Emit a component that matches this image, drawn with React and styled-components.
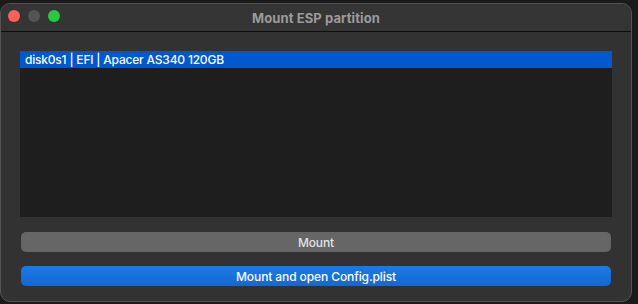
import React from "react";
import styled, { createGlobalStyle } from "styled-components";

const Global = createGlobalStyle`
  html, body { margin: 0; padding: 0; background: #1b1b1b; }
  body { font-family: Inter, "Noto Sans", sans-serif; -webkit-font-smoothing: antialiased; }
`;

const Screen = styled.div`
  width: 638px;
  height: 304px;
  padding-top: 3px;
  box-sizing: border-box;
  overflow: hidden;
`;

const Window = styled.div`
  width: 632px;
  height: 299px;
  box-sizing: border-box;
  background: #323232;
  border: 1px solid #545454;
  border-radius: 10px;
  display: flex;
  flex-direction: column;
  overflow: hidden;
`;

const TitleBar = styled.div`
  height: 27px;
  flex: none;
  position: relative;
  display: flex;
  align-items: center;
  justify-content: center;
  background: #353535;
  border-bottom: 1px solid #0e0e0e;
`;

const Lights = styled.div`
  position: absolute;
  left: 7px;
  top: 6px;
  display: flex;
  gap: 8px;
`;

const Light = styled.span`
  width: 12px;
  height: 12px;
  border-radius: 50%;
  background: ${(p) => p.$c};
`;

const Title = styled.div`
  font-size: 13px;
  font-weight: 700;
  color: #9b9b9b;
  letter-spacing: 0.1px;
`;

const Content = styled.div`
  flex: 1;
  padding: 19px 19px 0 19px;
  display: flex;
  flex-direction: column;
`;

const List = styled.div`
  height: 166px;
  background: #1e1e1e;
  display: flex;
  flex-direction: column;
`;

const Row = styled.div`
  height: 17px;
  display: flex;
  align-items: center;
  padding-left: 5px;
  font-size: 12px;
  font-weight: 500;
  letter-spacing: -0.2px;
  color: ${(p) => (p.$selected ? "#ffffff" : "#dddddd")};
  background: ${(p) => (p.$selected ? "#0058d0" : "transparent")};
`;

const Button = styled.button`
  margin: 0 1px;
  height: 20px;
  border: none;
  border-radius: 5px;
  font-family: inherit;
  font-size: 12px;
  font-weight: 500;
  letter-spacing: -0.1px;
  padding: 0;
  color: ${(p) => (p.$primary ? "#ffffff" : "#e2e2e2")};
  background: ${(p) =>
    p.$primary ? "linear-gradient(#1a7be6, #1668d0)" : "#666666"};
`;

const Gap = styled.div`
  height: ${(p) => p.$h}px;
  flex: none;
`;

export default function App() {
  return (
    <Screen>
      <Global />
      <Window>
        <TitleBar>
          <Lights>
            <Light $c="#fe5f57" />
            <Light $c="#545454" />
            <Light $c="#28c840" />
          </Lights>
          <Title>Mount ESP partition</Title>
        </TitleBar>
        <Content>
          <List>
            <Row $selected>disk0s1 | EFI | Apacer AS340 120GB</Row>
          </List>
          <Gap $h={15} />
          <Button>Mount</Button>
          <Gap $h={14} />
          <Button $primary>Mount and open Config.plist</Button>
        </Content>
      </Window>
    </Screen>
  );
}
